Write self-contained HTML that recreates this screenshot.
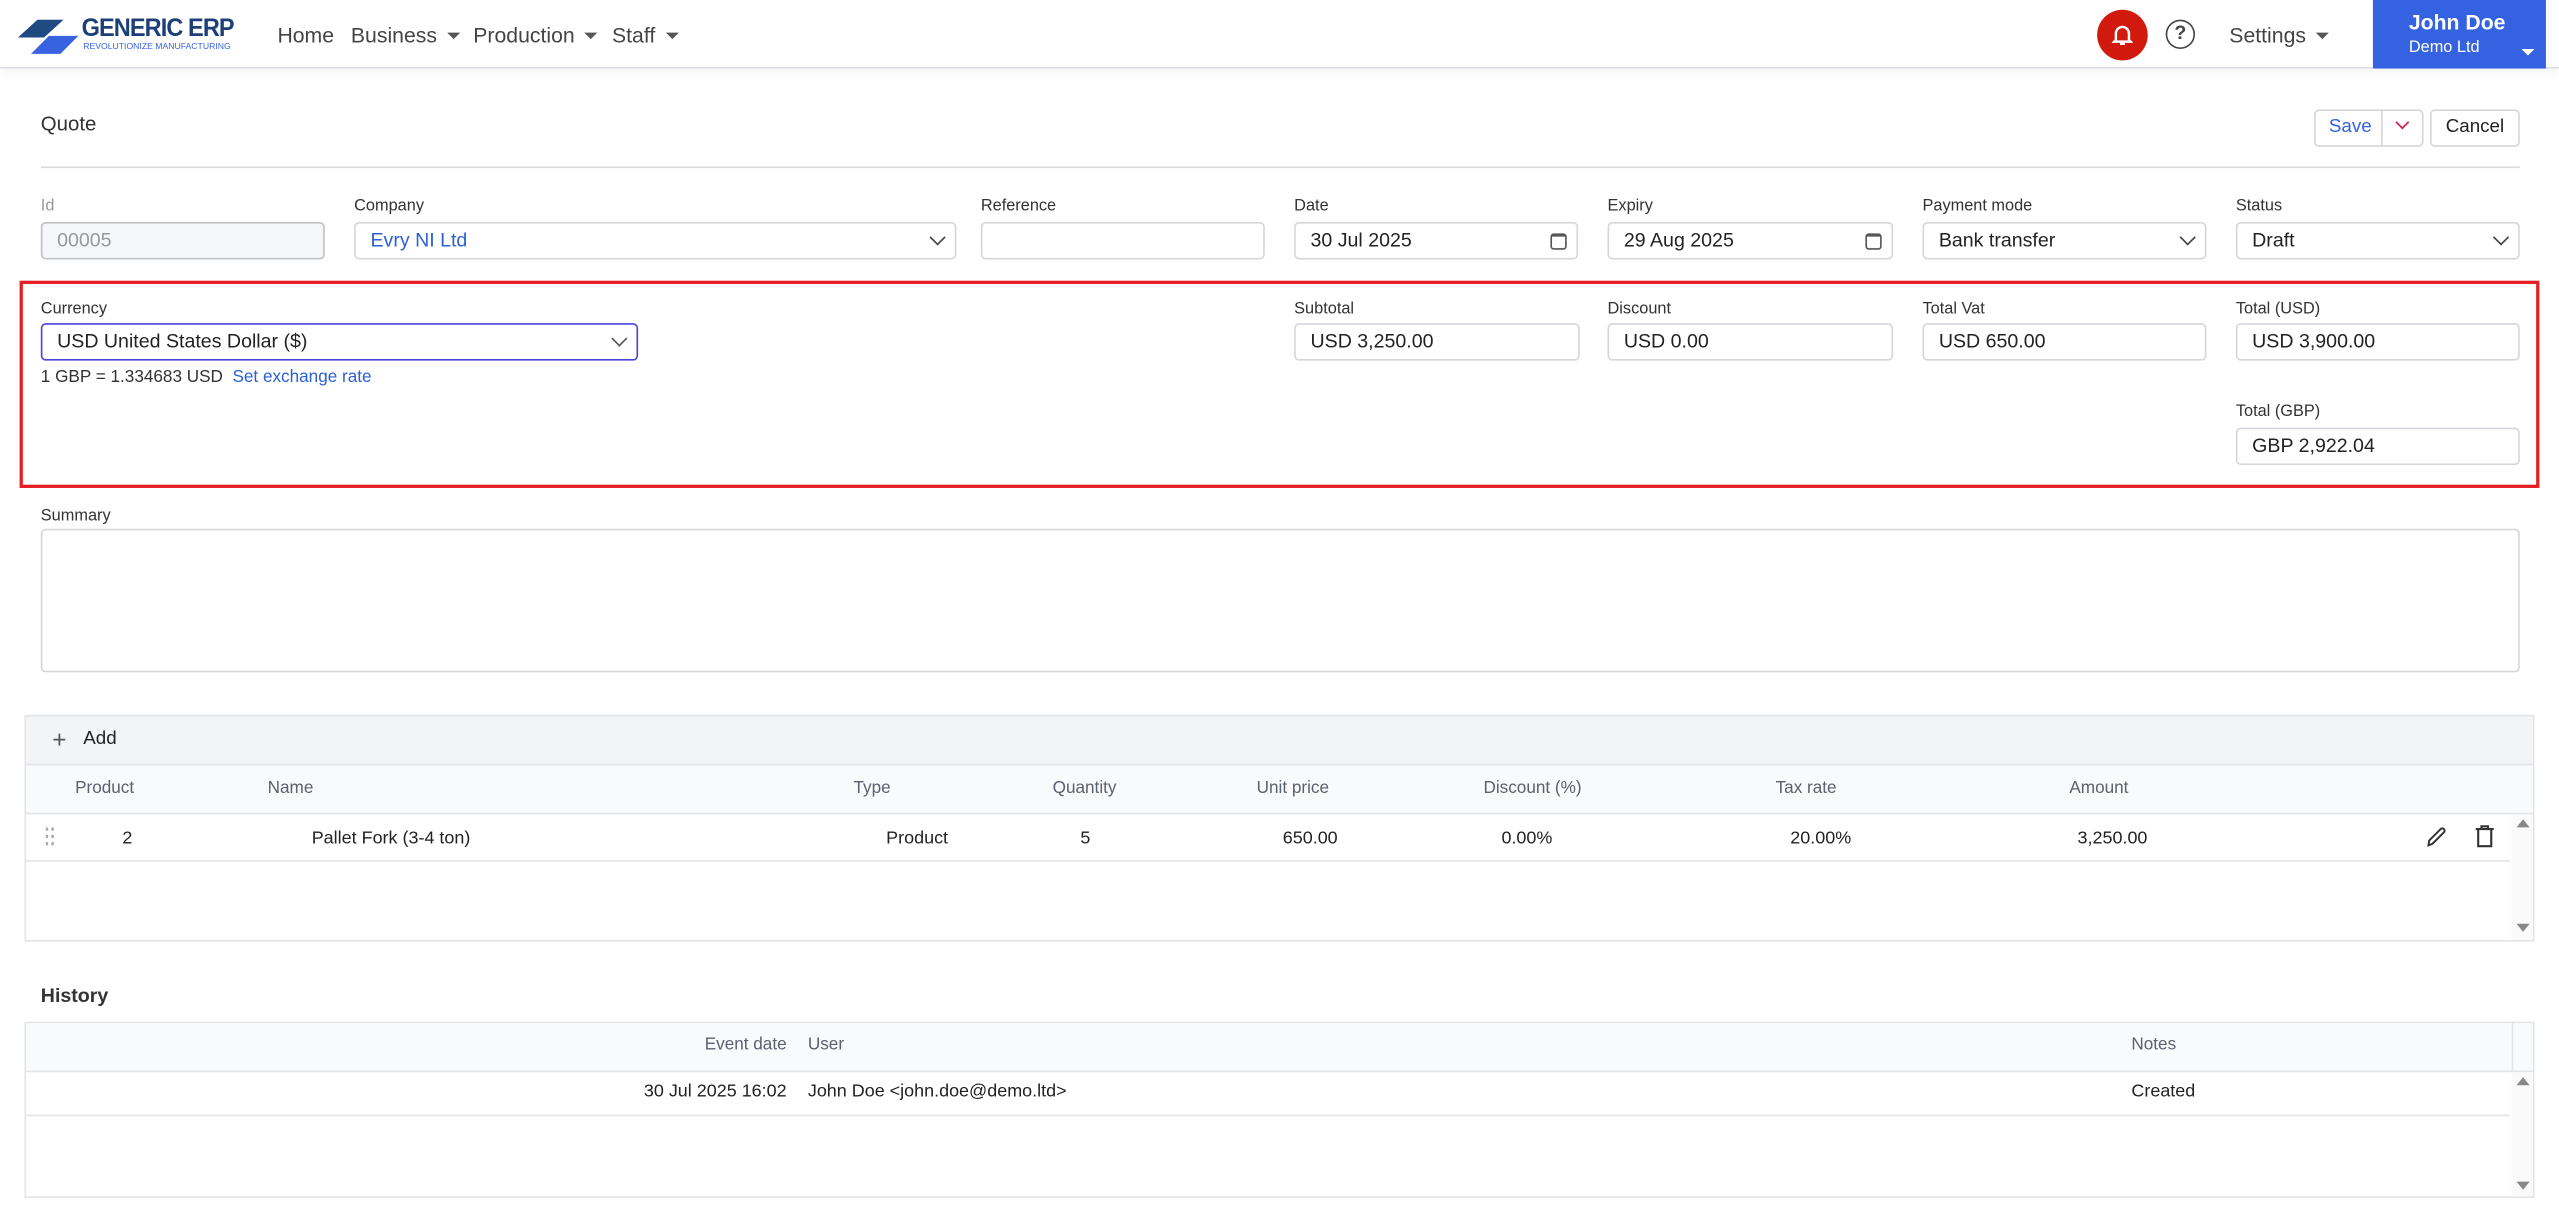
<!DOCTYPE html>
<html><head><meta charset="utf-8"><style>
*{box-sizing:border-box;margin:0;padding:0}
html,body{width:2559px;height:1225px;overflow:hidden;background:#fff}
#w{position:absolute;left:0;top:0;width:1568px;height:751px;transform:scale(1.632);transform-origin:0 0;font-family:"Liberation Sans",Arial,sans-serif;color:#222}
.a{position:absolute;white-space:nowrap}
.lbl{position:absolute;font-size:10px;color:#333}
.in{position:absolute;height:23px;border:1px solid #d4d6dc;border-radius:3px;background:#fff;font-size:12px;padding:0 9px;line-height:21px;color:#222}
.chev{position:absolute;right:7px;width:7px;height:7px;border-right:1.3px solid #444;border-bottom:1.3px solid #444;transform:rotate(45deg);top:5px}
.cal{position:absolute;right:6px;top:6px;width:10px;height:10px;border:1.2px solid #555;border-radius:2px;border-top-width:2.5px}
.th{position:absolute;font-size:10.5px;color:#5a6170}
.td{position:absolute;font-size:11px;color:#222}
.nav{position:absolute;top:14px;font-size:13px;color:#444}
.car{display:inline-block;width:0;height:0;border-left:4px solid transparent;border-right:4px solid transparent;border-top:4.5px solid #555;margin-left:6px;vertical-align:2px}
</style></head><body><div id="w">
<div class="a" style="left:0;top:0;width:1568px;height:42px;border-bottom:1px solid #dcdde3;box-shadow:0 2px 6px rgba(0,0,0,.05)"></div>
<svg class="a" style="left:10px;top:12px" width="42" height="22" viewBox="0 0 42 22"><polygon points="13,0 29,0 17,11 1,11" fill="#1f4a82"/><polygon points="20,10 38,10 27,21 9,21" fill="#3763e0"/></svg>
<div class="a" style="left:50px;top:9px;font-size:15.5px;font-weight:bold;color:#1c3f78;letter-spacing:-.6px;transform:scaleX(.93);transform-origin:0 0">GENERIC ERP</div>
<div class="a" style="left:51px;top:26px;font-size:5.3px;color:#3763e0">REVOLUTIONIZE MANUFACTURING</div>
<div class="nav" style="left:170px">Home</div>
<div class="nav" style="left:215px">Business<span class="car"></span></div>
<div class="nav" style="left:290px">Production<span class="car"></span></div>
<div class="nav" style="left:375px">Staff<span class="car"></span></div>
<div class="a" style="left:1285px;top:6px;width:31px;height:31px;border-radius:50%;background:#d11a0d"></div>
<svg class="a" style="left:1294px;top:14px" width="13" height="14" viewBox="0 0 13 14"><path d="M2.5 10.5 V6.5 a4 4 0 0 1 8 0 V10.5 L11.5 11.5 H1.5 Z" fill="none" stroke="#fff" stroke-width="1.5"/><path d="M5 12.8 h3" stroke="#fff" stroke-width="1.5"/></svg>
<div class="a" style="left:1327px;top:12px;width:18px;height:18px;border:1.6px solid #444;border-radius:50%;font-size:12px;font-weight:bold;color:#444;text-align:center;line-height:15px">?</div>
<div class="nav" style="left:1366px">Settings<span class="car"></span></div>
<div class="a" style="left:1454px;top:0;width:106px;height:42px;background:#3462e0"></div>
<div class="a" style="left:1476px;top:6px;font-size:13px;font-weight:bold;color:#fff">John Doe</div>
<div class="a" style="left:1476px;top:24px;font-size:10px;color:#fff">Demo Ltd</div>
<div class="a" style="left:1545px;top:30px;border-left:4px solid transparent;border-right:4px solid transparent;border-top:4.5px solid #fff"></div>
<div class="a" style="left:25px;top:69px;font-size:12.5px;color:#333">Quote</div>
<div class="a" style="left:25px;top:102px;width:1519px;height:1px;background:#d8d9de"></div>
<div class="a" style="left:1418px;top:67px;width:67px;height:23px;border:1px solid #d4d6dc;border-radius:3px"></div>
<div class="a" style="left:1459px;top:67px;width:1px;height:23px;background:#d4d6dc"></div>
<div class="a" style="left:1427px;top:72px;font-size:11.5px;color:#3462e0">Save</div>
<div class="a" style="left:1469px;top:72px;width:6px;height:6px;border-right:1.3px solid #d3174a;border-bottom:1.3px solid #d3174a;transform:rotate(45deg)"></div>
<div class="a" style="left:1489px;top:67px;width:55px;height:23px;border:1px solid #d4d6dc;border-radius:3px;font-size:11.5px;line-height:21px;text-align:center;color:#222">Cancel</div>
<div class="lbl" style="left:25px;top:121px;color:#999">Id</div>
<div class="in" style="left:25px;top:136px;width:174px;background:#f6f7f9;border-color:#bfc2c8;color:#999">00005</div>
<div class="lbl" style="left:217px;top:121px">Company</div>
<div class="in" style="left:217px;top:136px;width:369px;color:#2a5fd6">Evry NI Ltd<span class="chev"></span></div>
<div class="lbl" style="left:601px;top:121px">Reference</div>
<div class="in" style="left:601px;top:136px;width:174px"></div>
<div class="lbl" style="left:793px;top:121px">Date</div>
<div class="in" style="left:793px;top:136px;width:174px">30 Jul 2025<span class="cal"></span></div>
<div class="lbl" style="left:985px;top:121px">Expiry</div>
<div class="in" style="left:985px;top:136px;width:175px">29 Aug 2025<span class="cal"></span></div>
<div class="lbl" style="left:1178px;top:121px">Payment mode</div>
<div class="in" style="left:1178px;top:136px;width:174px">Bank transfer<span class="chev"></span></div>
<div class="lbl" style="left:1370px;top:121px">Status</div>
<div class="in" style="left:1370px;top:136px;width:174px">Draft<span class="chev"></span></div>
<div class="a" style="left:12px;top:172px;width:1544px;height:127px;border:2px solid #e51d24"></div>
<div class="lbl" style="left:25px;top:184px">Currency</div>
<div class="in" style="left:25px;top:198px;width:366px;border:1.6px solid #4a44d8;line-height:20px">USD United States Dollar ($)<span class="chev" style="border-color:#555"></span></div>
<div class="a" style="left:25px;top:225px;font-size:10.5px;color:#333">1 GBP = 1.334683 USD&nbsp; <span style="color:#2a5fd6">Set exchange rate</span></div>
<div class="lbl" style="left:793px;top:184px">Subtotal</div>
<div class="in" style="left:793px;top:198px;width:175px">USD 3,250.00</div>
<div class="lbl" style="left:985px;top:184px">Discount</div>
<div class="in" style="left:985px;top:198px;width:175px">USD 0.00</div>
<div class="lbl" style="left:1178px;top:184px">Total Vat</div>
<div class="in" style="left:1178px;top:198px;width:174px">USD 650.00</div>
<div class="lbl" style="left:1370px;top:184px">Total (USD)</div>
<div class="in" style="left:1370px;top:198px;width:174px">USD 3,900.00</div>
<div class="lbl" style="left:1370px;top:247px">Total (GBP)</div>
<div class="in" style="left:1370px;top:262px;width:174px">GBP 2,922.04</div>
<div class="lbl" style="left:25px;top:311px">Summary</div>
<div class="in" style="left:25px;top:324px;width:1519px;height:88px"></div>
<div class="a" style="left:15px;top:438px;width:1538px;height:139px;border:1px solid #e3e4e8"></div>
<div class="a" style="left:16px;top:439px;width:1536px;height:30px;background:#f3f4f6;border-bottom:1px solid #e3e4e8"></div>
<div class="a" style="left:32px;top:445px;font-size:15px;color:#555">+</div>
<div class="a" style="left:51px;top:447px;font-size:11.5px;color:#222">Add</div>
<div class="a" style="left:16px;top:469px;width:1536px;height:30px;background:#f9fafb;border-bottom:1px solid #e3e4e8"></div>
<div class="th" style="left:46px;top:477px">Product</div>
<div class="th" style="left:164px;top:477px">Name</div>
<div class="th" style="left:523px;top:477px">Type</div>
<div class="th" style="left:645px;top:477px">Quantity</div>
<div class="th" style="left:770px;top:477px">Unit price</div>
<div class="th" style="left:909px;top:477px">Discount (%)</div>
<div class="th" style="left:1088px;top:477px">Tax rate</div>
<div class="th" style="left:1268px;top:477px">Amount</div>
<div class="a" style="left:16px;top:527px;width:1522px;height:1px;background:#e3e4e8"></div>
<div class="a" style="left:1539px;top:499px;width:13px;height:77px;background:#fafafa"></div>
<div class="a" style="left:1542px;top:502px;border-left:4px solid transparent;border-right:4px solid transparent;border-bottom:5px solid #888"></div>
<div class="a" style="left:1542px;top:566px;border-left:4px solid transparent;border-right:4px solid transparent;border-top:5px solid #888"></div>
<svg class="a" style="left:28px;top:507px" width="6" height="12" viewBox="0 0 6 12"><g fill="#aaa"><rect x="0" y="0" width="1.5" height="2"/><rect x="3.5" y="0" width="1.5" height="2"/><rect x="0" y="4.5" width="1.5" height="2"/><rect x="3.5" y="4.5" width="1.5" height="2"/><rect x="0" y="9" width="1.5" height="2"/><rect x="3.5" y="9" width="1.5" height="2"/></g></svg>
<div class="td" style="left:75px;top:508px">2</div>
<div class="td" style="left:191px;top:508px">Pallet Fork (3-4 ton)</div>
<div class="td" style="left:543px;top:508px">Product</div>
<div class="td" style="left:662px;top:508px">5</div>
<div class="td" style="left:786px;top:508px">650.00</div>
<div class="td" style="left:920px;top:508px">0.00%</div>
<div class="td" style="left:1097px;top:508px">20.00%</div>
<div class="td" style="left:1273px;top:508px">3,250.00</div>
<svg class="a" style="left:1486px;top:506px" width="14" height="14" viewBox="0 0 14 14"><path d="M2 12 L2.5 9 L9.5 2 a1.4 1.4 0 0 1 2 2 L4.5 11 Z" fill="none" stroke="#333" stroke-width="1.2"/></svg>
<svg class="a" style="left:1516px;top:505px" width="13" height="15" viewBox="0 0 13 15"><path d="M1 3 H12 M4.5 3 V1.3 H8.5 V3 M2.5 3 V13.5 H10.5 V3" fill="none" stroke="#333" stroke-width="1.3"/></svg>
<div class="a" style="left:25px;top:603px;font-size:12px;font-weight:bold;color:#333">History</div>
<div class="a" style="left:15px;top:626px;width:1538px;height:108px;border:1px solid #e3e4e8"></div>
<div class="a" style="left:16px;top:627px;width:1536px;height:30px;background:#f9fafb;border-bottom:1px solid #e3e4e8"></div>
<div class="a" style="left:1539px;top:627px;width:1px;height:30px;background:#e3e4e8"></div>
<div class="th" style="right:1086px;top:634px">Event date</div>
<div class="th" style="left:495px;top:634px">User</div>
<div class="th" style="left:1306px;top:634px">Notes</div>
<div class="td" style="right:1086px;top:663px">30 Jul 2025 16:02</div>
<div class="td" style="left:495px;top:663px">John Doe &lt;john.doe@demo.ltd&gt;</div>
<div class="td" style="left:1306px;top:663px">Created</div>
<div class="a" style="left:16px;top:683px;width:1522px;height:1px;background:#e3e4e8"></div>
<div class="a" style="left:1539px;top:657px;width:13px;height:76px;background:#fafafa"></div>
<div class="a" style="left:1542px;top:660px;border-left:4px solid transparent;border-right:4px solid transparent;border-bottom:5px solid #888"></div>
<div class="a" style="left:1542px;top:724px;border-left:4px solid transparent;border-right:4px solid transparent;border-top:5px solid #888"></div>
</div></body></html>
